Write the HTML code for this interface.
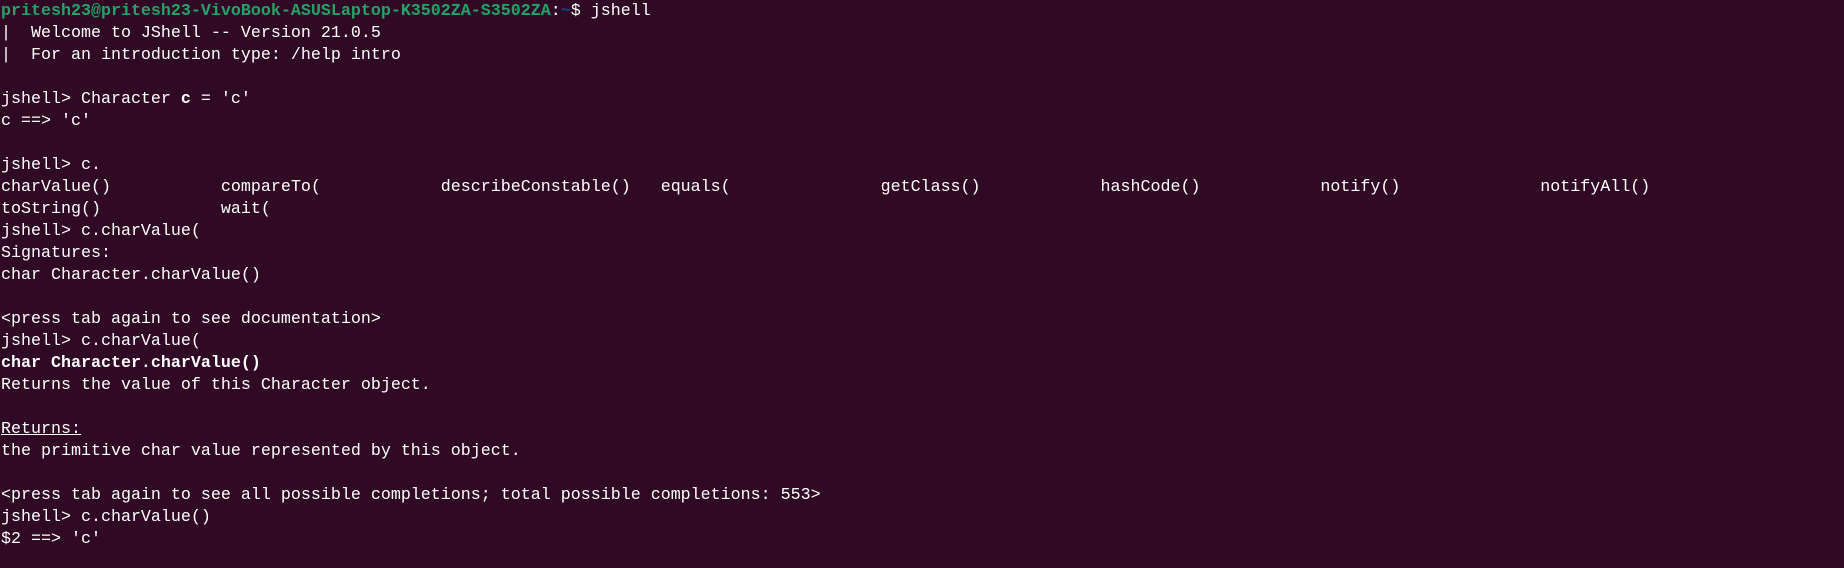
<!DOCTYPE html>
<html><head><meta charset="utf-8"><style>
html,body{margin:0;padding:0;background:#300a24;width:1844px;height:568px;overflow:hidden}
pre{margin:0;padding:1px 0 0 1px;font-family:"Liberation Mono","DejaVu Sans Mono",monospace;font-size:16.67px;line-height:22px;color:#ffffff;white-space:pre}
.g{color:#26a269;font-weight:bold}
.b{color:#12488b;font-weight:bold}
b{font-weight:bold}
u{text-decoration:underline}
</style></head><body><pre><span class="g">pritesh23@pritesh23-VivoBook-ASUSLaptop-K3502ZA-S3502ZA</span>:<span class="b">~</span>$ jshell
|  Welcome to JShell -- Version 21.0.5
|  For an introduction type: /help intro

jshell&gt; Character <b>c</b> = 'c'
c ==&gt; 'c'

jshell&gt; c.
charValue()           compareTo(            describeConstable()   equals(               getClass()            hashCode()            notify()              notifyAll()
toString()            wait(
jshell&gt; c.charValue(
Signatures:
char Character.charValue()

&lt;press tab again to see documentation&gt;
jshell&gt; c.charValue(
<b>char Character.charValue()</b>
Returns the value of this Character object.

<u>Returns:</u>
the primitive char value represented by this object.

&lt;press tab again to see all possible completions; total possible completions: 553&gt;
jshell&gt; c.charValue()
$2 ==&gt; 'c'
</pre></body></html>
